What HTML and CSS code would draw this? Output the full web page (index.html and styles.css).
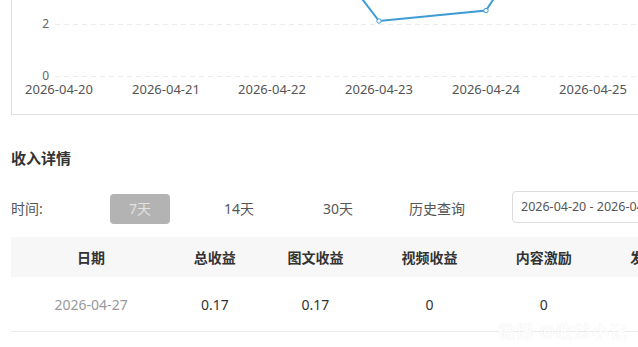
FILE: index.html
```
<!DOCTYPE html>
<html lang="zh-CN">
<head>
    <meta charset="UTF-8">
    <title>收入详情</title>
    <link rel="stylesheet" href="styles.css">
</head>
<body>
    <div class="page">
        <div class="chart">
            <svg class="chart-svg" width="639" height="114" viewBox="12 0 639 114">
                <line class="grid" x1="55" y1="24.5" x2="651" y2="24.5"></line>
                <line class="grid" x1="55" y1="76.5" x2="651" y2="76.5"></line>
                <text class="y-label" x="49" y="28">2</text>
                <text class="y-label" x="49" y="80">0</text>
                <text class="x-label" x="59" y="94">2026-04-20</text>
                <text class="x-label" x="166" y="94">2026-04-21</text>
                <text class="x-label" x="272" y="94">2026-04-22</text>
                <text class="x-label" x="379" y="94">2026-04-23</text>
                <text class="x-label" x="486" y="94">2026-04-24</text>
                <text class="x-label" x="593" y="94">2026-04-25</text>
                <polyline class="series" points="272,-119 379,21 486,10.5 593,-153"></polyline>
                <circle class="dot" cx="379" cy="21" r="2.2"></circle>
                <circle class="dot" cx="486" cy="10.5" r="2.2"></circle>
            </svg>
        </div>

        <h3 class="title">收入详情</h3>

        <div class="filter">
            <span class="filter-label">时间:</span>
            <span class="range range-active">7天</span>
            <span class="range">14天</span>
            <span class="range">30天</span>
            <span class="range">历史查询</span>
            <div class="date-input">2026-04-20 - 2026-04-26</div>
        </div>

        <table class="income-table">
            <colgroup>
                <col class="col-date">
                <col class="col-total">
                <col class="col-wide">
                <col class="col-wide">
                <col class="col-wide">
                <col class="col-wide">
            </colgroup>
            <thead>
                <tr>
                    <th>日期</th>
                    <th>总收益</th>
                    <th>图文收益</th>
                    <th>视频收益</th>
                    <th>内容激励</th>
                    <th>发文收益</th>
                </tr>
            </thead>
            <tbody>
                <tr>
                    <td class="cell-date">2026-04-27</td>
                    <td>0.17</td>
                    <td>0.17</td>
                    <td>0</td>
                    <td>0</td>
                    <td></td>
                </tr>
            </tbody>
        </table>
    </div>

    <div class="watermark">微博 @收益小记</div>
</body>
</html>
```

FILE: styles.css
```
body {
    margin: 0;
    overflow: hidden;
    background: #fff;
    font-family: "Noto Sans", "Noto Sans CJK SC", sans-serif;
    color: #333;
}
.page {
    padding-left: 11px;
    width: 760px;
}
.chart {
    width: 640px;
    height: 114px;
    border-left: 1px solid #e2e2e2;
    border-bottom: 1px solid #e2e2e2;
}
.chart-svg {
    display: block;
    overflow: hidden;
}
.grid {
    stroke: #ececec;
    stroke-width: 1;
    stroke-dasharray: 5 4;
}
.y-label {
    font-size: 12px;
    fill: #666;
    text-anchor: end;
}
.x-label {
    font-size: 13px;
    fill: #555;
    text-anchor: middle;
}
.series {
    fill: none;
    stroke: #3d9bd6;
    stroke-width: 2;
}
.dot {
    fill: #fff;
    stroke: #3d9bd6;
    stroke-width: 1;
}
.title {
    margin: 33px 0 0;
    font-size: 15px;
    line-height: 20px;
    font-weight: bold;
    color: #333;
}
.filter {
    display: flex;
    align-items: flex-start;
    margin-top: 23px;
    font-size: 14px;
    color: #555;
}
.filter > * {
    flex-shrink: 0;
}
.filter-label {
    width: 99px;
    margin-top: 3px;
    line-height: 30px;
}
.range {
    width: 60px;
    height: 30px;
    margin-top: 3px;
    margin-right: 39px;
    line-height: 30px;
    text-align: center;
    border-radius: 4px;
    white-space: nowrap;
}
.range-active {
    background: #b3b3b3;
    color: #e2e2e2;
}
.range:last-of-type {
    margin-right: 45px;
}
.date-input {
    width: 200px;
    height: 30px;
    padding-left: 8px;
    line-height: 30px;
    font-size: 12.5px;
    color: #555;
    border: 1px solid #dcdcdc;
    border-radius: 4px;
    white-space: nowrap;
}
.income-table {
    margin-top: 13px;
    border-collapse: collapse;
    table-layout: fixed;
    width: 704px;
}
.col-date {
    width: 160px;
}
.col-total {
    width: 87px;
}
.col-wide {
    width: 114px;
}
.income-table th {
    height: 40px;
    padding: 0;
    background: #f7f7f7;
    font-size: 14px;
    font-weight: bold;
    color: #333;
    text-align: center;
}
.income-table td {
    height: 54px;
    padding: 0;
    font-size: 14px;
    color: #333;
    text-align: center;
    border-bottom: 1px solid #ebebeb;
}
.income-table .cell-date {
    color: #999;
}
.watermark {
    position: absolute;
    left: 498px;
    top: 318px;
    font-size: 17px;
    font-weight: bold;
    color: rgba(255, 255, 255, 0.95);
    text-shadow: 0 0 1px rgba(0, 0, 0, 0.1);
    letter-spacing: 1px;
}
```
